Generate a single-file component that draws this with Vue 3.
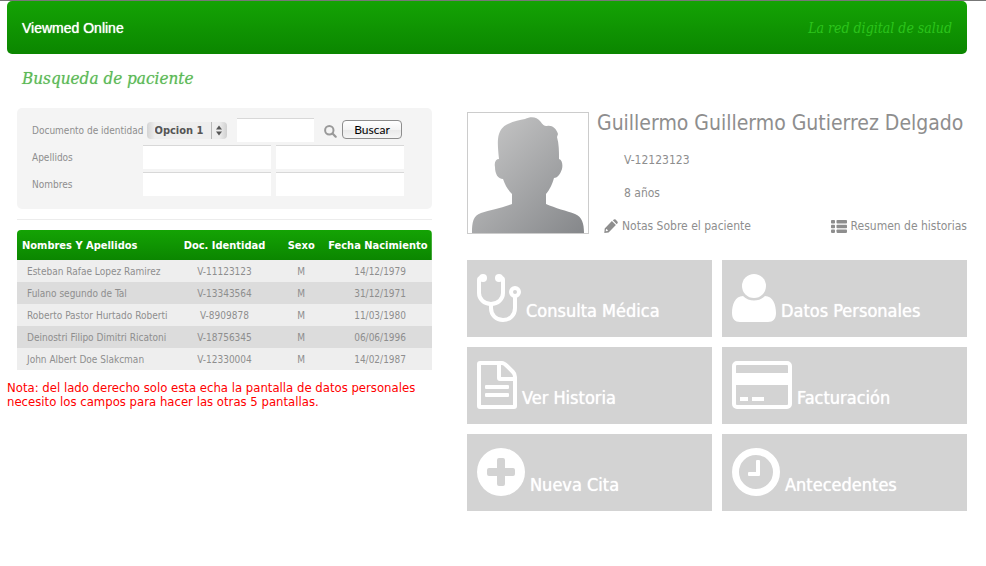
<script setup>
import { ref } from 'vue'

const documentType = ref('Opcion 1')

const patients = [
  { name: 'Esteban Rafae Lopez Ramirez', doc: 'V-11123123', sex: 'M', birth: '14/12/1979' },
  { name: 'Fulano segundo de Tal', doc: 'V-13343564', sex: 'M', birth: '31/12/1971' },
  { name: 'Roberto Pastor Hurtado Roberti', doc: 'V-8909878', sex: 'M', birth: '11/03/1980' },
  { name: 'Deinostri Filipo Dimitri Ricatoni', doc: 'V-18756345', sex: 'M', birth: '06/06/1996' },
  { name: 'John Albert Doe Slakcman', doc: 'V-12330004', sex: 'M', birth: '14/02/1987' },
]
</script>

<template>
  <div class="page">
    <header class="topbar">
      <strong class="brand">Viewmed Online</strong>
      <em class="slogan">La red digital de salud</em>
    </header>

    <main class="columns">
      <section class="left">
        <h1 class="heading">Busqueda de paciente</h1>

        <div class="results">
          <form class="search" @submit.prevent>
            <div class="row">
              <label class="label" for="doc-number">Documento de identidad</label>
              <div class="fields first">
                <span class="picker">
                  <select v-model="documentType" aria-label="Tipo de documento">
                    <option>Opcion 1</option>
                    <option>Opcion 2</option>
                  </select>
                  <svg class="arrows" viewBox="0 0 16 17" aria-hidden="true">
                    <path d="M0.5 0V17" stroke="#b9b9b9" fill="none" />
                    <path d="M8 3.500l3 4h-6zM8 13.500l3-4h-6z" fill="#555" />
                  </svg>
                </span>
                <input id="doc-number" class="box short" type="text" />
                <svg class="lens" viewBox="0 0 13 13" aria-hidden="true">
                  <circle cx="5.300" cy="5.300" r="4.200" fill="none" stroke="#999" stroke-width="2" />
                  <path d="M8.500 8.500l3.200 3.200" stroke="#999" stroke-width="2.200" stroke-linecap="round" />
                </svg>
                <button class="submit" type="submit">Buscar</button>
              </div>
            </div>
            <div class="row">
              <label class="label" for="surname-1">Apellidos</label>
              <div class="fields">
                <input id="surname-1" class="box" type="text" />
                <input class="box" type="text" aria-label="Segundo apellido" />
              </div>
            </div>
            <div class="row">
              <label class="label" for="name-1">Nombres</label>
              <div class="fields">
                <input id="name-1" class="box" type="text" />
                <input class="box" type="text" aria-label="Segundo nombre" />
              </div>
            </div>
          </form>

          <hr class="rule" />

          <table class="patients">
            <thead>
              <tr>
                <th class="c-name">Nombres Y Apellidos</th>
                <th class="c-doc">Doc. Identidad</th>
                <th class="c-sex">Sexo</th>
                <th class="c-birth">Fecha Nacimiento</th>
              </tr>
            </thead>
            <tbody>
              <tr v-for="p in patients" :key="p.doc">
                <td class="c-name">{{ p.name }}</td>
                <td>{{ p.doc }}</td>
                <td>{{ p.sex }}</td>
                <td>{{ p.birth }}</td>
              </tr>
            </tbody>
          </table>
        </div>

        <p class="note">Nota: del lado derecho solo esta echa la pantalla de datos personales necesito los campos para hacer las otras 5 pantallas.</p>
      </section>

      <section class="right">
        <div class="profile">
          <svg class="photo" viewBox="0 0 120 120" role="img" aria-label="Foto del paciente">
            <defs>
              <linearGradient id="skin" x1="0" y1="0" x2="1" y2="1">
                <stop offset="0" stop-color="#cbcbcb" />
                <stop offset="1" stop-color="#85878a" />
              </linearGradient>
            </defs>
            <path fill="url(#skin)" d="M4 120C4 109 5 103 13 100C22 97 33 95 44 91V81C40 77 37 72 35 66C30 66 27 61 27 54C26 49 28 46 31 46C30 36 29 27 31 21C33 15 37 12 40 11C46 8 52 7 57 6C63 3 69 4 72 8C75 12 76 13 79 13C84 12 88 15 90 21L89 24C91 31 91 38 91 46C94 47 95 51 94 56C92 62 89 65 86 65C84 72 82 76 78 81V91C87 95 99 98 107 101C114 104 116 110 116 120Z" />
          </svg>
          <div class="details">
            <h2 class="fullname">Guillermo Guillermo Gutierrez Delgado</h2>
            <p class="fact">V-12123123</p>
            <p class="fact">8 años</p>
            <nav class="links">
              <a href="#notas">
                <svg class="pencil" viewBox="0 0 14 14" aria-hidden="true">
                  <path fill="#8e8e8e" fill-rule="evenodd" d="M7.900 2.100L11.900 6.100L4.600 13.400L0.300 13.900L0.700 9.400ZM2 10.500L1.700 12.300L3.500 12L4 11.500L2.700 10ZM8.800 1.300L10 0.400Q10.900 0 11.600 0.600L13.400 2.400Q14 3.100 13.700 4L12.700 5.200Z" />
                </svg>
                Notas Sobre el paciente
              </a>
              <a href="#resumen">
                <svg class="list" viewBox="0 0 16 13" aria-hidden="true">
                  <g fill="#8e8e8e">
                    <rect width="4" height="3.500" rx="0.800" /><rect x="5.500" width="10.500" height="3.500" rx="0.800" />
                    <rect y="4.700" width="4" height="3.500" rx="0.800" /><rect x="5.500" y="4.700" width="10.500" height="3.500" rx="0.800" />
                    <rect y="9.400" width="4" height="3.500" rx="0.800" /><rect x="5.500" y="9.400" width="10.500" height="3.500" rx="0.800" />
                  </g>
                </svg>
                Resumen de historias
              </a>
            </nav>
          </div>
        </div>

        <nav class="tiles">
          <a class="tile" href="#consulta">
            <svg width="44" height="48" viewBox="0 0 44 48" aria-hidden="true">
              <g fill="none" stroke="#fff" stroke-width="4">
                <path d="M6 4H4Q2 4 2 6V19C2 25 7 30 14 30C21 30 26 25 26 19V6Q26 4 24 4H22" />
                <path d="M14 30V34C14 41 19 46 26 46C33 46 38 41 38 34V22" />
                <circle cx="38" cy="18" r="4" />
              </g>
              <circle cx="6" cy="4" r="4" fill="#fff" /><circle cx="22" cy="4" r="4" fill="#fff" />
            </svg>
            <span>Consulta Médica</span>
          </a>
          <a class="tile" href="#datos">
            <svg width="44" height="48" viewBox="0 0 44 48" aria-hidden="true">
              <g fill="#fff">
                <circle cx="22" cy="12" r="12" />
                <path d="M11 22C14 25 18 26.500 22 26.500C26 26.500 30 25 33 22C41 22 44 31 44 39C44 45 41 48 36 48H8C3 48 0 45 0 39C0 31 3 22 11 22Z" />
              </g>
            </svg>
            <span>Datos Personales</span>
          </a>
          <a class="tile" href="#historia">
            <svg width="40" height="48" viewBox="0 0 40 48" aria-hidden="true">
              <g fill="none" stroke="#fff" stroke-width="4" stroke-linejoin="round">
                <path d="M3 2H25C27 2 29 4 30 5L36 11C37 12 38 14 38 16V45Q38 46 37 46H3Q2 46 2 45V3Q2 2 3 2Z" />
                <path d="M22 2V17Q22 18 23 18H38" />
              </g>
              <path fill="#fff" d="M9 24H31Q32 24 32 25V27Q32 28 31 28H9Q8 28 8 27V25Q8 24 9 24ZM9 32H31Q32 32 32 33V35Q32 36 31 36H9Q8 36 8 35V33Q8 32 9 32Z" />
            </svg>
            <span>Ver Historia</span>
          </a>
          <a class="tile" href="#facturacion">
            <svg width="60" height="48" viewBox="0 0 60 48" aria-hidden="true">
              <rect x="2" y="2" width="56" height="44" rx="3" fill="none" stroke="#fff" stroke-width="4" />
              <path d="M2 12H58V24H2ZM8 36H16V40H8ZM20 36H32V40H20Z" fill="#fff" />
            </svg>
            <span>Facturación</span>
          </a>
          <a class="tile" href="#cita">
            <svg width="48" height="48" viewBox="0 0 48 48" aria-hidden="true">
              <circle cx="24" cy="24" r="24" fill="#fff" />
              <path fill="#d3d3d3" d="M22 10H26Q28 10 28 12V20H36Q38 20 38 22V26Q38 28 36 28H28V36Q28 38 26 38H22Q20 38 20 36V28H12Q10 28 10 26V22Q10 20 12 20H20V12Q20 10 22 10Z" />
            </svg>
            <span>Nueva Cita</span>
          </a>
          <a class="tile" href="#antecedentes">
            <svg width="48" height="48" viewBox="0 0 48 48" aria-hidden="true">
              <circle cx="24" cy="24" r="20.500" fill="none" stroke="#fff" stroke-width="7" />
              <path fill="#fff" d="M25 12H27Q28 12 28 13V27Q28 28 27 28H17Q16 28 16 27V25Q16 24 17 24H24V13Q24 12 25 12Z" />
            </svg>
            <span>Antecedentes</span>
          </a>
        </nav>
      </section>
    </main>
  </div>
</template>

<style>
body {
  background: #fff;
}
</style>

<style scoped>
.page {
  border-top: 1px solid #777;
  padding: 0 19px 0 7px;
  font-family: "DejaVu Sans Condensed", "DejaVu Sans", sans-serif;
  color: #8e8e8e;
}
.topbar {
  display: flex;
  align-items: center;
  justify-content: space-between;
  height: 53px;
  padding: 0 15px;
  border-radius: 5px;
  background: linear-gradient(#14a304, #0b8600);
}
.brand {
  font: 14px "Liberation Sans", sans-serif;
  color: #fff;
  text-shadow: 0 0 1px #fff;
}
.slogan,
.heading {
  font-family: "DejaVu Serif Condensed", "DejaVu Serif", serif;
  font-style: italic;
  font-weight: normal;
}
.slogan {
  font-size: 14px;
  color: #2cc41c;
}
.columns {
  display: grid;
  grid-template-columns: minmax(0, 425fr) minmax(0, 500fr);
  gap: 35px;
}
.heading {
  margin: 12px 15px 18px;
  font-size: 17px;
  line-height: 24px;
  color: #5cb957;
  text-shadow: 0 0 1px #a5d8a2;
}
.results {
  padding-left: 10px;
}
.search {
  display: grid;
  grid-template-columns: minmax(0, 1fr);
  gap: 3px;
  padding: 10px 15px 13px;
  border-radius: 5px;
  background: #f4f4f4;
}
.row {
  display: flex;
  align-items: center;
  height: 24px;
}
.label {
  flex: 0 0 111px;
  font-size: 10px;
  white-space: nowrap;
}
.fields {
  display: flex;
  flex: 1;
  gap: 5px;
  min-width: 0;
  padding-right: 13px;
}
.first {
  align-items: center;
  padding-right: 15px;
}
.box {
  flex: 1;
  width: 0;
  min-width: 0;
  box-sizing: border-box;
  height: 24px;
  margin: 0;
  padding: 0 4px;
  border: 0;
  border-top: 1px solid #d8d8d8;
  background: #fff;
}
.short {
  margin: 0 5px;
}
.picker {
  display: grid;
  flex: none;
  width: 80px;
  height: 17px;
  margin-left: 3px;
}
.picker > * {
  grid-area: 1 / 1;
}
.picker select {
  appearance: none;
  width: 80px;
  height: 17px;
  padding: 0 18px 0 8px;
  border: 0;
  border-radius: 4px;
  background: linear-gradient(90deg, #d4d4d4, #eee 8px, #eee 72px, #d0d0d0);
  font: bold 11px/17px "DejaVu Sans Condensed", "DejaVu Sans", sans-serif;
  color: #555;
}
.arrows {
  justify-self: end;
  width: 16px;
  height: 17px;
  pointer-events: none;
}
.lens {
  flex: none;
  width: 13px;
  height: 13px;
  margin-top: 3px;
}
.submit {
  flex: none;
  width: 60px;
  height: 19px;
  margin-bottom: 2px;
  padding: 0;
  border: 1px solid #8d8d8d;
  border-radius: 4px;
  background: linear-gradient(#fff, #f4f4f4 50%, #e9e9e9 51%, #f6f6f6);
  font: 12px/15px Lato, sans-serif;
  color: #000;
}
.rule {
  height: 1px;
  margin: 10px 0;
  border: 0;
  background: #ececec;
}
.patients {
  width: 100%;
  table-layout: fixed;
  border-spacing: 0;
  border-radius: 4px 4px 0 0;
  overflow: hidden;
  font-size: 10px;
  text-align: center;
}
.patients thead {
  background: linear-gradient(#14a304, #0b8600);
}
.patients th {
  box-sizing: border-box;
  height: 30px;
  padding: 0;
  font-size: 11px;
  color: #fff;
  white-space: nowrap;
}
.patients td {
  height: 22px;
  padding: 0;
  white-space: nowrap;
}
.patients tbody tr {
  background: #eee;
}
.patients tbody tr:nth-child(even) {
  background: #dcdcdc;
}
.patients th.c-name {
  width: 38%;
  padding-left: 5px;
  text-align: left;
}
.patients td.c-name {
  padding-left: 10px;
  text-align: left;
}
.c-doc {
  width: 24%;
}
.c-sex {
  width: 13%;
}
.patients th.c-birth {
  width: 25%;
  padding-right: 5px;
}
.note {
  margin: 11px 0 0;
  font-size: 13px;
  line-height: 14px;
  color: #f00;
}
.right {
  padding-top: 58px;
}
.profile {
  display: flex;
  gap: 8px;
}
.photo {
  flex: none;
  width: 120px;
  height: 120px;
  border: 1px solid #ccc;
}
.details {
  flex: 1;
  display: flex;
  flex-direction: column;
  min-width: 0;
}
.fullname {
  margin: 0 0 11px;
  font-size: 21px;
  font-weight: normal;
  line-height: 22px;
  white-space: nowrap;
}
.fact {
  margin: 0 0 3px;
  padding-left: 27px;
  font-size: 12px;
  line-height: 30px;
}
.links {
  display: flex;
  justify-content: space-between;
  margin-top: 7px;
  padding-left: 7px;
  font-size: 12px;
  line-height: 16px;
}
.links a {
  display: flex;
  align-items: center;
  gap: 4px;
  color: inherit;
  text-decoration: none;
  white-space: nowrap;
}
.pencil {
  width: 14px;
  height: 14px;
}
.list {
  width: 16px;
  height: 13px;
}
.tiles {
  display: grid;
  grid-template-columns: 1fr 1fr;
  gap: 10px;
  margin-top: 26px;
}
.tile {
  display: flex;
  align-items: flex-end;
  gap: 5px;
  padding: 14px 10px 15px;
  background: #d3d3d3;
  color: #fff;
  font-size: 18px;
  line-height: 22px;
  text-decoration: none;
  text-shadow: 0 0 1px #fff;
}
</style>
